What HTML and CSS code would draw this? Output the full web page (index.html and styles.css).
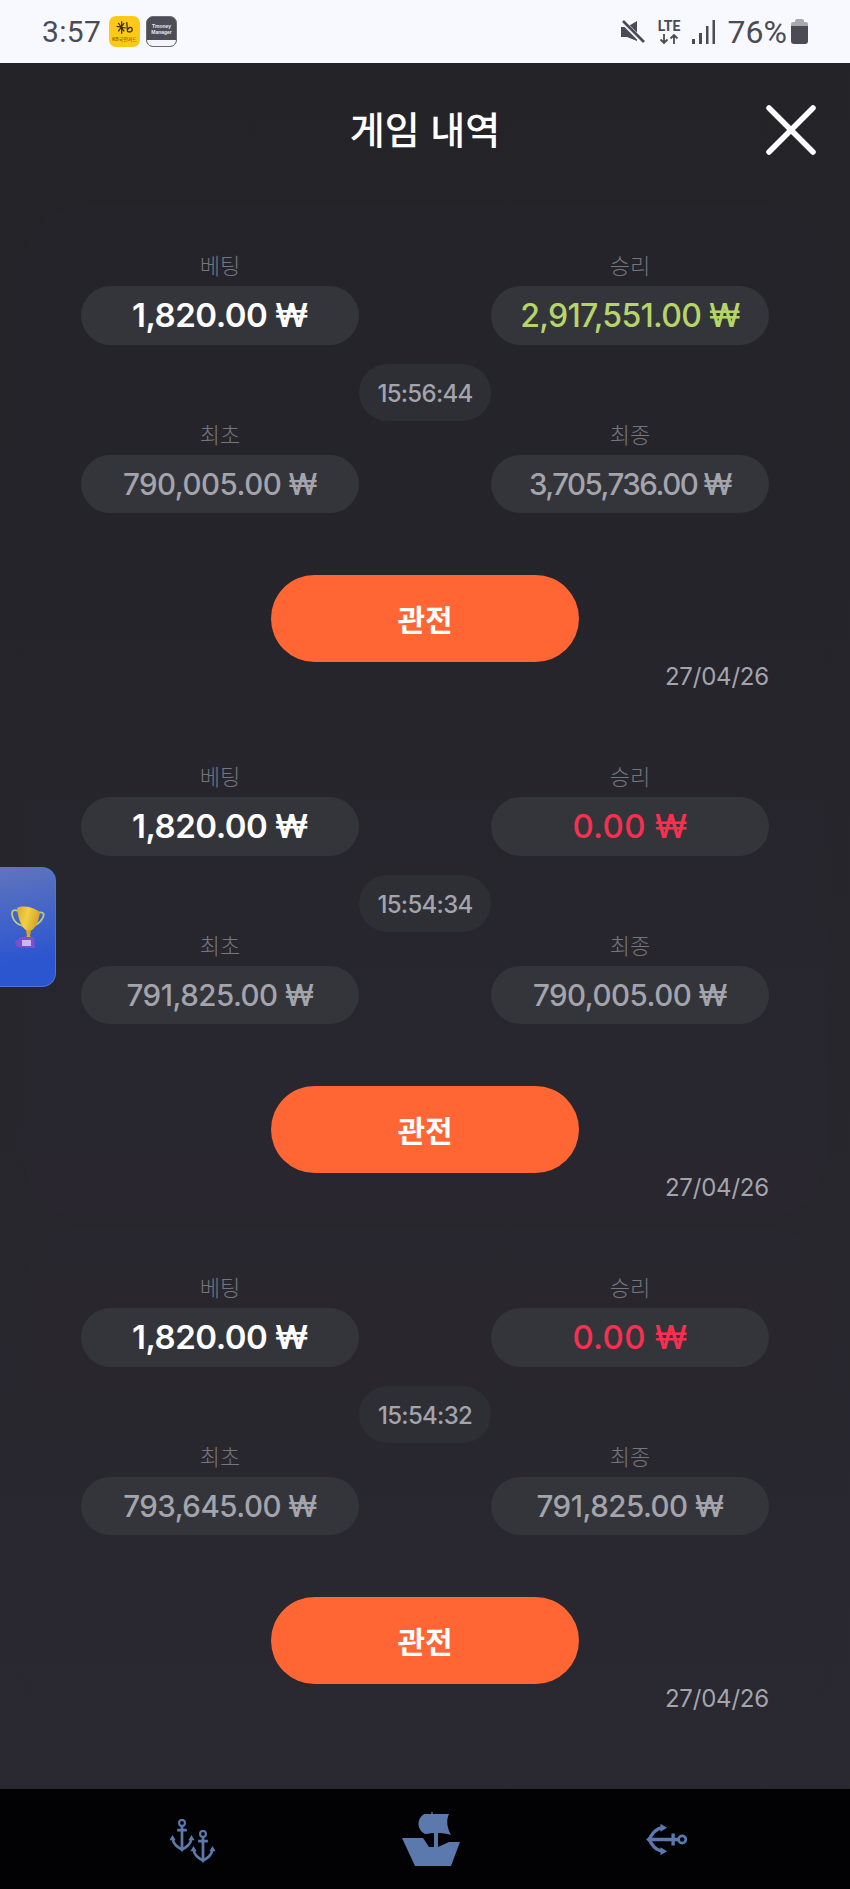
FILE: index.html
```html
<!DOCTYPE html>
<html lang="ko">
<head>
<meta charset="utf-8">
<title>게임 내역</title>
<link rel="stylesheet" href="styles.css">
</head>
<body>
<svg class="defs" width="0" height="0" aria-hidden="true">
  <defs>
    <linearGradient id="cup" x1="0" y1="0" x2="1" y2="0.3">
      <stop offset="0" stop-color="#d9a92a"/><stop offset="0.5" stop-color="#f3cf45"/><stop offset="1" stop-color="#d8a426"/>
    </linearGradient>
  </defs>
  <symbol id="anchor" viewBox="0 0 26 34">
    <circle cx="13" cy="4" r="3" fill="none" stroke="currentColor" stroke-width="2.200"/>
    <path d="M13 7V31M8 11.500H18" fill="none" stroke="currentColor" stroke-width="2.800"/>
    <path d="M3.200 20C4 26 9 30 13 31C17 30 22 26 22.800 20" fill="none" stroke="currentColor" stroke-width="2.800"/>
    <path d="M0 22L3.200 16.500L6.500 22ZM19.500 22L22.800 16.500L26 22ZM9.500 30L13 34L16.500 30Z" fill="currentColor"/>
  </symbol>
</svg>
<div class="page">
  <header class="status">
    <div class="status-left">
      <span class="clock">3:57</span>
      <span class="app app-kb">
        <svg class="kb-mark" viewBox="0 0 24 16"><path d="M2 6L13 8M4 2L11 12M11 2L4 12M8 0V15M14 1L15 12C19 14 22 11 20 8C18 6 16 8 15 10" fill="none" stroke="#3a2a10" stroke-width="1.500"/></svg>
        <span class="kb-text">KB국민카드</span>
      </span>
      <span class="app app-tm"><span class="tm-text">Tmoney<br>Manager</span><span class="tm-fold"></span></span>
    </div>
    <div class="status-right">
      <svg class="ic-mute" viewBox="0 0 24 24"><path d="M0 7H6L16 1V21L6 17H0Z" fill="#4a4b55"/><path d="M1 1L23 23" stroke="#f8f9ff" stroke-width="5"/><path d="M2 1L23 22" stroke="#4a4b55" stroke-width="2.600"/></svg>
      <span class="lte"><span class="lte-t">LTE</span>
        <svg class="lte-a" viewBox="0 0 20 10"><path d="M5 0V9M1.500 5.500L5 9L8.500 5.500M15 10V1M11.500 4.500L15 1L18.500 4.500" fill="none" stroke="#4a4b55" stroke-width="1.800"/></svg>
      </span>
      <svg class="ic-signal" viewBox="0 0 23 24"><rect x="0" y="19" width="3" height="5" fill="#4a4b55"/><rect x="7" y="13" width="3" height="11" fill="#4a4b55"/><rect x="14" y="6" width="2.500" height="18" fill="#4a4b55"/><rect x="20.500" y="0" width="2.500" height="24" fill="#4a4b55"/></svg>
      <span class="pct">76%</span>
      <span class="battery"></span>
    </div>
  </header>

  <main class="main">
    <div class="top">
      <h1 class="title">게임 내역</h1>
      <button class="close" aria-label="닫기">
        <svg viewBox="0 0 50 50"><path d="M3 3L47 47M47 3L3 47" stroke="#fff" stroke-width="5.500" stroke-linecap="round"/></svg>
      </button>
    </div>

    <section class="card">
      <div class="grid">
        <div class="cell"><div class="label">베팅</div><div class="pill v-white">1,820.00 ₩</div></div>
        <div class="cell"><div class="label">승리</div><div class="pill v-green">2,917,551.00 ₩</div></div>
      </div>
      <div class="time">15:56:44</div>
      <div class="grid">
        <div class="cell"><div class="label">최초</div><div class="pill v-grey">790,005.00 ₩</div></div>
        <div class="cell"><div class="label">최종</div><div class="pill v-grey v-tight">3,705,736.00 ₩</div></div>
      </div>
      <button class="watch">관전</button>
      <div class="date">27/04/26</div>
    </section>

    <section class="card">
      <div class="grid">
        <div class="cell"><div class="label">베팅</div><div class="pill v-white">1,820.00 ₩</div></div>
        <div class="cell"><div class="label">승리</div><div class="pill v-red">0.00 ₩</div></div>
      </div>
      <div class="time">15:54:34</div>
      <div class="grid">
        <div class="cell"><div class="label">최초</div><div class="pill v-grey">791,825.00 ₩</div></div>
        <div class="cell"><div class="label">최종</div><div class="pill v-grey">790,005.00 ₩</div></div>
      </div>
      <button class="watch">관전</button>
      <div class="date">27/04/26</div>
    </section>

    <section class="card">
      <div class="grid">
        <div class="cell"><div class="label">베팅</div><div class="pill v-white">1,820.00 ₩</div></div>
        <div class="cell"><div class="label">승리</div><div class="pill v-red">0.00 ₩</div></div>
      </div>
      <div class="time">15:54:32</div>
      <div class="grid">
        <div class="cell"><div class="label">최초</div><div class="pill v-grey">793,645.00 ₩</div></div>
        <div class="cell"><div class="label">최종</div><div class="pill v-grey">791,825.00 ₩</div></div>
      </div>
      <button class="watch">관전</button>
      <div class="date">27/04/26</div>
    </section>
  </main>

  <aside class="trophy-tab">
    <svg class="trophy" viewBox="0 0 34 44">
      <path d="M7 6C1 3 0 8 2 13C4 18 8 20 12 21" fill="none" stroke="#b9c98a" stroke-width="1.800"/>
      <path d="M27 8C33 6 34 10 31 14C28 19 25 20 21 22" fill="none" stroke="#b9c98a" stroke-width="1.800"/>
      <path d="M6 3C12 0 22 2 29 7C28 15 25 24 19 26C12 27 7 15 6 3Z" fill="url(#cup)"/>
      <path d="M15 25H20L19 31L22 34H13L16 31Z" fill="#d9a625"/>
      <path d="M4 37L10 32H23L24 43L6 42Z" fill="#7c4fd0"/>
      <rect x="11" y="35" width="9" height="6" fill="#cdb6f2"/>
    </svg>
  </aside>

  <nav class="bottom">
    <svg class="ic-anchors" viewBox="0 0 47 44">
      <use href="#anchor" x="0" y="0" width="26" height="33"/>
      <use href="#anchor" x="21" y="11" width="26" height="33"/>
    </svg>
    <svg class="ic-ship" viewBox="0 0 58 56">
      <path d="M0 27H21L27 36H32V22H36V36L47 31H58L49 55H13Z" fill="currentColor"/>
      <path d="M22 3H29L30 0L31 3H47C44 9 45 17 49 24C40 21 30 22 23 23C15 19 14 8 22 3Z" fill="currentColor"/>
    </svg>
    <svg class="ic-back" viewBox="0 0 41 33">
      <use href="#anchor" x="0" y="0" width="33" height="41" transform="translate(41 0) rotate(90)"/>
    </svg>
  </nav>
</div>
</body>
</html>
```
FILE: styles.css
```css
* { box-sizing: border-box; }
html, body { margin: 0; padding: 0; }
body {
  width: 850px;
  height: 1889px;
  overflow: hidden;
  font-family: Inter, "Noto Sans CJK KR", sans-serif;
  background: #25252a;
}
.defs { position: absolute; }
.page {
  position: relative;
  width: 850px;
  height: 1889px;
  display: flex;
  flex-direction: column;
}

/* status bar */
.status {
  height: 63px;
  flex: none;
  background: #f8f9ff;
  color: #4a4b55;
  display: flex;
  justify-content: space-between;
  align-items: center;
  padding: 0 42px;
}
.status-left { display: flex; align-items: center; }
.clock {
  font: 400 30px/1 Roboto, sans-serif;
  width: 67px;
  letter-spacing: 0.3px;
}
.app {
  width: 31px;
  height: 31px;
  border-radius: 7px;
  margin-right: 6px;
  display: block;
  overflow: hidden;
  position: relative;
}
.app-kb {
  background: #fcc917;
  display: flex;
  flex-direction: column;
  align-items: center;
  padding-top: 5px;
}
.kb-mark { width: 20px; height: 14px; display: block; }
.kb-text {
  font: 400 5px/7px "Noto Sans CJK KR", sans-serif;
  color: #5a4510;
  white-space: nowrap;
}
.app-tm { background: #4c4d57; border: 1px solid #6a6b75; text-align: center; }
.tm-text {
  display: block;
  font: 700 5px/6px "Liberation Sans", sans-serif;
  color: #e8e8ee;
  padding-top: 6px;
}
.tm-fold {
  position: absolute;
  left: 0;
  right: 0;
  bottom: 0;
  height: 6px;
  background: #f4f5fb;
}
.status-right { display: flex; align-items: center; }
.ic-mute { width: 24px; height: 24px; margin-right: 12px; display: block; margin-left: 1px; }
.lte {
  width: 25px;
  display: flex;
  flex-direction: column;
  align-items: center;
  margin-right: 10px;
}
.lte-t { font: 700 14px/14px Roboto, sans-serif; }
.lte-a { width: 20px; height: 10px; display: block; margin-top: 1px; }
.ic-signal { width: 23px; height: 24px; display: block; margin-right: 13px; }
.pct { font: 400 32px/1 Roboto, sans-serif; margin-right: 4px; }
.battery {
  position: relative;
  width: 17px;
  height: 22px;
  margin-top: 3px;
  border-radius: 2px 2px 3px 3px;
  background: linear-gradient(#a9aab1 0 20%, #4a4b55 20%);
}
.battery::before {
  content: "";
  position: absolute;
  left: 4px;
  top: -3px;
  width: 9px;
  height: 3px;
  border-radius: 2px 2px 0 0;
  background: #a9aab1;
}

/* main */
.main {
  flex: 1;
  min-height: 0;
  background: linear-gradient(#232328, #2a2830);
  display: flex;
  flex-direction: column;
  align-items: center;
}
.top {
  width: 100%;
  height: 142px;
  flex: none;
  position: relative;
}
.title {
  margin: 0;
  padding-top: 39px;
  text-align: center;
  font: 500 38px/52px "Noto Sans CJK KR", sans-serif;
  color: #fff;
}
.close {
  position: absolute;
  left: 766px;
  top: 42px;
  width: 50px;
  height: 50px;
  padding: 0;
  border: 0;
  background: none;
}
.close svg { display: block; width: 50px; height: 50px; }

.card {
  width: 804px;
  height: 501px;
  flex: none;
  margin-bottom: 10px;
  padding: 47px 58px 0;
  border-radius: 60px;
  background: rgba(46, 38, 52, 0.2);
  display: flex;
  flex-direction: column;
  align-items: center;
}
.grid {
  width: 100%;
  display: grid;
  grid-template-columns: 278px 278px;
  justify-content: space-between;
}
.cell { display: flex; flex-direction: column; align-items: center; }
.label {
  height: 34px;
  font: 300 22px/24px "Noto Sans CJK KR", sans-serif;
  color: #75757d;
}
.pill {
  width: 100%;
  height: 58.500px;
  border-radius: 30px;
  background: #34343b;
  display: flex;
  align-items: center;
  justify-content: center;
  white-space: nowrap;
  font-weight: 500;
}
.v-white { color: #fff; font-weight: 600; font-size: 33px; letter-spacing: -0.5px; }
.v-green { color: #b6d568; font-size: 32px; letter-spacing: -0.7px; }
.v-red { color: #f6304f; font-size: 33px; letter-spacing: 0.3px; }
.v-grey { color: #a4a4ad; font-size: 29.500px; letter-spacing: -0.5px; }
.v-tight { letter-spacing: -1.500px; }
.time {
  margin-top: 19px;
  width: 132px;
  height: 57px;
  padding-top: 2px;
  border-radius: 29px;
  background: #2e2e35;
  color: #a4a4ad;
  font-size: 24px;
  font-weight: 500;
  letter-spacing: -0.7px;
  display: flex;
  align-items: center;
  justify-content: center;
}
.watch {
  margin-top: 62px;
  width: 308px;
  height: 87px;
  flex: none;
  border: 0;
  padding: 0 0 2px;
  border-radius: 44px;
  background: #ff6633;
  color: #fff;
  font: 700 30px/1 "Noto Sans CJK KR", sans-serif;
}
.date {
  align-self: flex-end;
  height: 30px;
  font-size: 24px;
  line-height: 30px;
  letter-spacing: -0.2px;
  color: #a4a4ad;
}

/* reward tab */
.trophy-tab {
  position: absolute;
  left: 0;
  top: 867px;
  width: 56px;
  height: 120px;
  border-radius: 0 14px 14px 0;
  background: linear-gradient(170deg, #5f74bd, #2c56d0 75%);
  border: 1px solid #4f74d6;
  border-left: 0;
  display: flex;
  align-items: center;
  justify-content: center;
}
.trophy { width: 34px; height: 44px; display: block; }

/* bottom bar */
.bottom {
  height: 100px;
  flex: none;
  background: #020104;
  color: #5b79ad;
  display: flex;
  align-items: center;
  justify-content: center;
  gap: 186px;
  padding-left: 5px;
}
.bottom svg { display: block; overflow: visible; }
.ic-anchors { width: 47px; height: 44px; margin-top: 4px; }
.ic-ship { width: 58px; height: 56px; }
.ic-back { width: 41px; height: 33px; }
```
